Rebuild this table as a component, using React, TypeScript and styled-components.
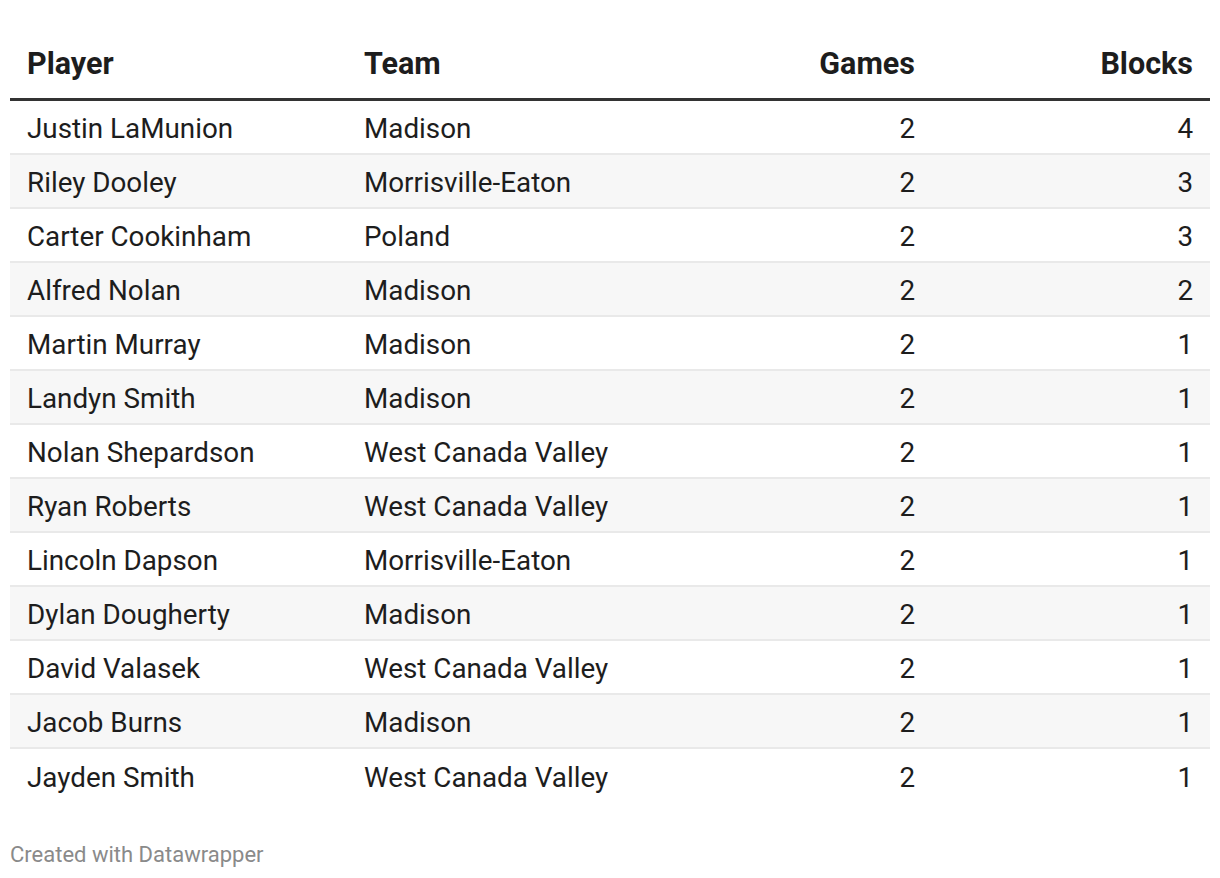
import styled, { createGlobalStyle } from "styled-components";

const GlobalStyle = createGlobalStyle`
  body {
    margin: 0;
    background: #ffffff;
    font-family: Roboto, "Noto Sans", Arial, sans-serif;
    color: #1d1d1d;
  }
`;

type Row = { player: string; team: string; games: number; blocks: number };

const rows: Row[] = [
  { player: "Justin LaMunion", team: "Madison", games: 2, blocks: 4 },
  { player: "Riley Dooley", team: "Morrisville-Eaton", games: 2, blocks: 3 },
  { player: "Carter Cookinham", team: "Poland", games: 2, blocks: 3 },
  { player: "Alfred Nolan", team: "Madison", games: 2, blocks: 2 },
  { player: "Martin Murray", team: "Madison", games: 2, blocks: 1 },
  { player: "Landyn Smith", team: "Madison", games: 2, blocks: 1 },
  { player: "Nolan Shepardson", team: "West Canada Valley", games: 2, blocks: 1 },
  { player: "Ryan Roberts", team: "West Canada Valley", games: 2, blocks: 1 },
  { player: "Lincoln Dapson", team: "Morrisville-Eaton", games: 2, blocks: 1 },
  { player: "Dylan Dougherty", team: "Madison", games: 2, blocks: 1 },
  { player: "David Valasek", team: "West Canada Valley", games: 2, blocks: 1 },
  { player: "Jacob Burns", team: "Madison", games: 2, blocks: 1 },
  { player: "Jayden Smith", team: "West Canada Valley", games: 2, blocks: 1 },
];

const App = () => {
  return (
    <Page>
      <GlobalStyle />
      <Table>
        <HeadRow>
          <HeadCell>Player</HeadCell>
          <HeadCell>Team</HeadCell>
          <HeadCell $right>Games</HeadCell>
          <HeadCell $right>Blocks</HeadCell>
        </HeadRow>
        {rows.map((r, i) => (
          <BodyRow key={r.player} $striped={i % 2 === 1} $last={i === rows.length - 1}>
            <Cell>{r.player}</Cell>
            <Cell>{r.team}</Cell>
            <Cell $right>{r.games}</Cell>
            <Cell $right>{r.blocks}</Cell>
          </BodyRow>
        ))}
      </Table>
      <Footer>Created with Datawrapper</Footer>
    </Page>
  );
};

const Page = styled.div`
  width: 1200px;
  padding: 30px 10px 0;
`;

const Table = styled.div`
  display: flex;
  flex-direction: column;
`;

const columns = "337px 337px 248px 278px";

const HeadRow = styled.div`
  display: grid;
  grid-template-columns: ${columns};
  box-sizing: border-box;
  height: 71px;
  border-bottom: 3px solid #333333;
`;

const HeadCell = styled.div<{ $right?: boolean }>`
  display: flex;
  align-items: center;
  justify-content: ${(p) => (p.$right ? "flex-end" : "flex-start")};
  padding: 0 17px 2px;
  font-size: 30.5px;
  font-weight: 700;
  color: #1d1d1d;
`;

const BodyRow = styled.div<{ $striped: boolean; $last: boolean }>`
  display: grid;
  grid-template-columns: ${columns};
  height: 54px;
  box-sizing: border-box;
  background: ${(p) => (p.$striped ? "#f7f7f7" : "#ffffff")};
  border-bottom: ${(p) => (p.$last ? "none" : "2px solid #e9e9e9")};
`;

const Cell = styled.div<{ $right?: boolean }>`
  display: flex;
  align-items: center;
  justify-content: ${(p) => (p.$right ? "flex-end" : "flex-start")};
  padding: 2px 17px 0;
  font-size: 27.8px;
  color: #1d1d1d;
`;

const Footer = styled.div`
  margin-top: 39px;
  font-size: 22px;
  color: #8a8a8a;
`;

export default App;
